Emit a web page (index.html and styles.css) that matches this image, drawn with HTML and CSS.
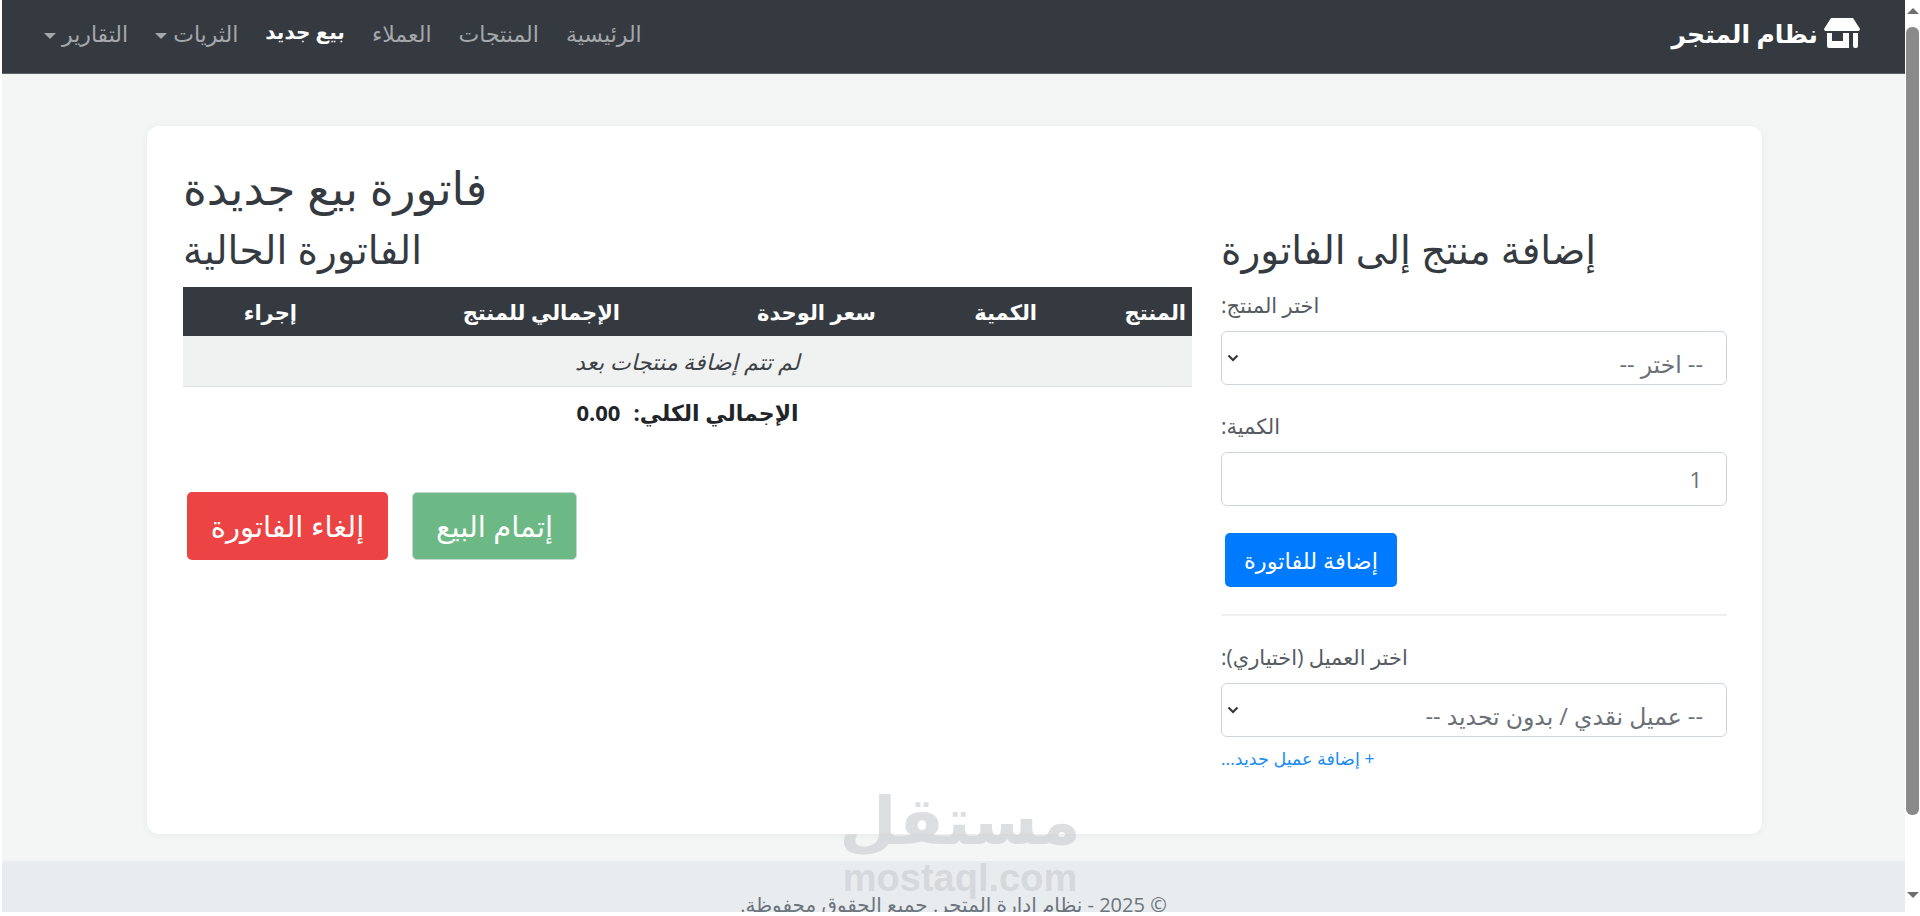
FILE: index.html
```html
<!DOCTYPE html>
<html lang="ar" dir="rtl">
<head>
<meta charset="utf-8">
<title>فاتورة بيع جديدة</title>
<link rel="stylesheet" href="styles.css">
</head>
<body>
<div class="viewport">
  <div class="page">
    <nav class="navbar">
      <a class="brand">
        <svg class="brand-icon" viewBox="0 0 36 30" width="36" height="30" aria-hidden="true"><path fill="#fff" d="M7 0H29L36 11Q36 13 34 13H2Q0 13 0 11Z"/><path fill="#fff" fill-rule="evenodd" d="M3 15H25V30H5Q3 30 3 28ZM8 15V23H19V15Z"/><path fill="#fff" d="M29 15H34V28Q34 30 32 30H31Q29 30 29 28Z"/></svg>
        <span>نظام المتجر</span>
      </a>
      <ul class="nav">
        <li>الرئيسية</li>
        <li>المنتجات</li>
        <li>العملاء</li>
        <li class="active">بيع جديد</li>
        <li class="caret">الثريات</li>
        <li class="caret">التقارير</li>
      </ul>
    </nav>
    <main class="main">
      <section class="card">
        <h1 class="title">فاتورة بيع جديدة</h1>
        <div class="columns">
          <div class="form-col">
            <h2 class="heading">إضافة منتج إلى الفاتورة</h2>
            <label class="label">اختر المنتج:</label>
            <div class="select"><span>-- اختر --</span><svg class="chev" viewBox="0 0 12 8" width="12" height="8"><path d="M1.500 1.500 6 6l4.500-4.500" fill="none" stroke="#333" stroke-width="2"/></svg></div>
            <label class="label label-gap">الكمية:</label>
            <input class="input" value="1">
            <button class="btn btn-blue">إضافة للفاتورة</button>
            <hr class="rule">
            <label class="label">اختر العميل (اختياري):</label>
            <div class="select"><span>-- عميل نقدي / بدون تحديد --</span><svg class="chev" viewBox="0 0 12 8" width="12" height="8"><path d="M1.500 1.500 6 6l4.500-4.500" fill="none" stroke="#333" stroke-width="2"/></svg></div>
            <a class="link">+ إضافة عميل جديد...</a>
          </div>
          <div class="invoice-col">
            <h2 class="heading">الفاتورة الحالية</h2>
            <table class="table">
              <thead><tr><th>المنتج</th><th>الكمية</th><th>سعر الوحدة</th><th>الإجمالي للمنتج</th><th>إجراء</th></tr></thead>
              <tbody><tr><td colspan="5"><em>لم تتم إضافة منتجات بعد</em></td></tr></tbody>
            </table>
            <div class="total"><span>الإجمالي الكلي:</span><span>0.00</span></div>
            <div class="actions">
              <button class="btn btn-lg btn-green">إتمام البيع</button>
              <button class="btn btn-lg btn-red">إلغاء الفاتورة</button>
            </div>
          </div>
        </div>
      </section>
    </main>
    <footer class="footer">© 2025 - نظام ادارة المتجر. جميع الحقوق محفوظة.</footer>
  </div>
  <div class="scrollbar">
    <i class="arrow up"></i>
    <i class="thumb"></i>
    <i class="arrow down"></i>
  </div>
  <div class="watermark"><span class="wm-ar">مستقل</span><span class="wm-en">mostaql.com</span></div>
</div>
</body>
</html>
```

FILE: styles.css
```css
* { box-sizing: border-box; }
html, body { margin: 0; height: 916px; overflow: hidden; background: #fff; }
body { font-family: "Open Sans", "DejaVu Sans", sans-serif; color: #212529; font-size: 16px; }
.viewport { position: relative; display: flex; height: 912px; direction: ltr; }
.page { flex: 1; margin-left: 2px; direction: rtl; background: #f4f6f6; overflow: hidden; }
.navbar { height: 74px; background: #343a40; border-bottom: 1px solid #5b6167; display: flex; align-items: center; padding: 0 45px 8px 42px; justify-content: space-between; }
.brand { display: flex; align-items: center; gap: 6px; color: #fff; font-weight: 700; font-size: 25px; }
.brand-icon { display: block; }
.nav { list-style: none; display: flex; gap: 27px; margin: 0; padding: 0; color: #a5a8ab; font-size: 22px; }
.nav .active { color: #fff; font-weight: 700; font-size: 20px; }
.caret::after { content: ""; display: inline-block; margin-right: 6px; vertical-align: 3px; border-top: 6px solid currentColor; border-left: 6px solid transparent; border-right: 6px solid transparent; }
.main { height: 787px; padding: 52px 143px 0 145px; }
.card { height: 708px; background: #fff; border-radius: 12px; box-shadow: 0 1px 8px rgba(0,0,0,.05); padding: 32px 35px 0 36px; }
.title { margin: 0; font-size: 45.500px; line-height: 58px; font-weight: 400; color: #343a40; text-align: left; }
.columns { display: flex; gap: 29px; align-items: flex-start; padding-top: 5px; }
.form-col { width: 506px; flex: none; }
.invoice-col { flex: 1; }
.heading { margin: 0 0 10px; font-size: 39px; line-height: 56px; font-weight: 400; color: #343a40; height: 56px; text-align: left; white-space: nowrap; }
.form-col .heading { margin-bottom: 14px; }
.label { display: block; color: #555b61; font-size: 21px; line-height: 28px; margin-bottom: 12px; text-align: left; }
.label-gap { margin-top: 27px; }
.select, .input { display: block; position: relative; width: 100%; height: 54px; background: #fff; border: 1px solid #ced4da; border-radius: 6px; color: #6a7076; font-family: inherit; font-size: 23.500px; }
.select span { position: absolute; right: 23px; top: 17px; line-height: 30px; white-space: nowrap; }
.chev { position: absolute; left: 5px; top: 22px; }
.input { padding: 0 24px; text-align: right; direction: rtl; font-size: 22px; }
.btn { display: block; border: 0; border-radius: 5px; color: #fff; font-family: inherit; font-size: 22.500px; padding: 0; }
.btn-blue { width: 172px; height: 54px; margin: 27px auto 0 4px; background: #007bff; }
.rule { border: 0; border-top: 2px solid #eeeff0; margin: 27px 0 27px; }
.link { display: block; color: #1b8cf2; font-size: 17.500px; line-height: 20px; margin-top: 11px; text-align: left; }
.table { width: 100%; border-collapse: collapse; table-layout: fixed; }
.table th { height: 49px; background: #343a40; color: #fff; font-size: 21px; font-weight: 700; text-align: right; padding: 0 6px; white-space: nowrap; }
.table th:nth-child(1) { width: 149px; }
.table th:nth-child(2) { width: 161px; }
.table th:nth-child(3) { width: 256px; }
.table th:nth-child(4) { width: 323px; }
.table td { height: 50px; background: #f0f1f1; border-bottom: 1px solid #dee2e6; text-align: center; color: #3d4247; font-size: 22px; }
.total { display: flex; justify-content: center; gap: 13px; font-size: 22px; font-weight: 700; line-height: 50px; }
.actions { display: flex; justify-content: flex-end; gap: 24px; margin-top: 55px; padding-left: 4px; }
.btn-lg { height: 68px; font-size: 29px; }
.btn-green { width: 165px; background: #6cb985; border: 1px solid #c6d8d0; }
.btn-red { width: 201px; background: #ec4444; }
.footer { height: 60px; background: #e9ecef; text-align: center; font-size: 20px; line-height: 88px; color: #6c757d; }
.scrollbar { width: 15px; flex: none; background: #fff; position: relative; display: flex; flex-direction: column; align-items: center; padding: 8px 0 14px; }
.thumb { flex: 1; width: 13px; margin: 13px 0 77px; border-radius: 6px; background: #8a8a8a; }
.arrow { width: 0; height: 0; border-left: 6px solid transparent; border-right: 6px solid transparent; }
.up { border-bottom: 6px solid #6e6e6e; }
.down { border-top: 6px solid #6e6e6e; }
.watermark { position: absolute; left: 845px; top: 778px; width: 230px; display: flex; flex-direction: column; align-items: center; color: #cfd2d5; opacity: .72; pointer-events: none; }
.wm-ar { font-size: 66px; line-height: 80px; font-weight: 700; direction: rtl; }
.wm-en { font-size: 38px; line-height: 40px; font-weight: 700; font-family: "Liberation Sans", sans-serif; }
```
